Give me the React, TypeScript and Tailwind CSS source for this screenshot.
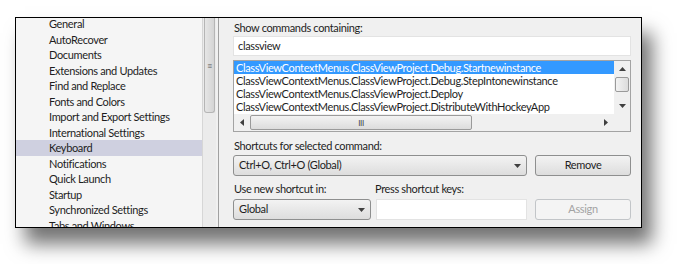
import { ReactNode } from "react";

const pages = [
  "General",
  "AutoRecover",
  "Documents",
  "Extensions and Updates",
  "Find and Replace",
  "Fonts and Colors",
  "Import and Export Settings",
  "International Settings",
  "Keyboard",
  "Notifications",
  "Quick Launch",
  "Startup",
  "Synchronized Settings",
  "Tabs and Windows",
];

const commands = [
  "ClassViewContextMenus.ClassViewProject.Debug.Startnewinstance",
  "ClassViewContextMenus.ClassViewProject.Debug.StepIntonewinstance",
  "ClassViewContextMenus.ClassViewProject.Deploy",
  "ClassViewContextMenus.ClassViewProject.DistributeWithHockeyApp",
];

function Arrow({ dir }: { dir: "up" | "down" | "left" | "right" }) {
  const pts = {
    up: "0,4 3.5,0 7,4",
    down: "0,0 7,0 3.5,4",
    left: "4,0 4,7 0,3.5",
    right: "0,0 0,7 4,3.5",
  }[dir];
  const vertical = dir === "up" || dir === "down";
  return (
    <svg width={vertical ? 7 : 4} height={vertical ? 4 : 7} className="block">
      <polygon points={pts} fill="#404040" />
    </svg>
  );
}

function Combo({ children, className }: { children: ReactNode; className: string }) {
  return (
    <div
      className={`flex h-[21px] items-center justify-between rounded-[3px] border border-[#8e8f8f] bg-gradient-to-b from-[#f3f3f3] to-[#dddddd] pl-[5px] pr-[5px] ${className}`}
    >
      <span>{children}</span>
      <Arrow dir="down" />
    </div>
  );
}

export default function App() {
  return (
    <div
      className="h-[264px] w-[677px] bg-white pl-[15px] pt-[17px] text-[11px] tracking-[-0.35px] text-[#1e1e1e]"
      style={{ fontFamily: 'Lato, "Noto Sans", sans-serif' }}
    >
      <div className="flex h-[211px] w-[627px] overflow-hidden border border-black bg-[#f0f0f0] shadow-[10px_16px_18px_rgba(0,0,0,0.55)]">
        {/* left page list */}
        <div className="w-[186px] shrink-0 overflow-hidden bg-[#f5f5f5]">
          <div className="-mt-[2px]">
            {pages.map((p) => (
              <div
                key={p}
                className={`h-[15.5px] whitespace-nowrap pl-[33px] leading-[15.5px] ${p === "Keyboard" ? "bg-[#cfd0e0]" : ""}`}
              >
                {p}
              </div>
            ))}
          </div>
        </div>
        <div className="w-[14px] shrink-0 border-l border-[#d6d6d6] bg-[#ebebeb]">
          <div className="mx-[1px] flex h-[95px] items-center justify-center rounded-b-[3px] border border-t-0 border-[#b5b5b5] bg-gradient-to-r from-[#e6e6e6] to-[#d4d4d4] text-[9px] leading-none text-[#555]">
            ≡
          </div>
        </div>
        <div className="w-[3px] shrink-0 border-r border-[#a0a0a0] bg-[#f0f0f0]" />

        {/* right keyboard settings */}
        <div className="min-w-0 flex-1 pl-[14px] pr-[10px] pt-[2px]">
          <div className="h-[16px] pl-[1px] leading-[16px]">Show commands containing:</div>
          <div className="h-[20px] border border-[#e3e3e3] bg-white pl-[4px] leading-[18px]">classview</div>
          <div className="mt-[4px] flex h-[72px] flex-col border border-[#a3a3a3] bg-white">
            <div className="flex min-h-0 flex-1">
              <div className="min-w-0 flex-1 overflow-hidden">
                {commands.map((c, i) => (
                  <div
                    key={c}
                    className={`h-[13px] whitespace-nowrap pl-[2px] leading-[13px] ${i === 0 ? "bg-[#3399ff] text-white" : ""}`}
                  >
                    {c}
                  </div>
                ))}
              </div>
              <div className="flex w-[16px] shrink-0 flex-col items-center bg-[#f0f0f0]">
                <div className="flex h-[16px] items-center justify-center">
                  <Arrow dir="up" />
                </div>
                <div className="h-[15px] w-[14px] rounded-[2px] border border-[#9a9a9a] bg-gradient-to-r from-[#f3f3f3] to-[#dcdcdc]" />
                <div className="flex flex-1 items-end justify-center pb-[6px]">
                  <Arrow dir="down" />
                </div>
              </div>
            </div>
            <div className="flex h-[17px] shrink-0 items-center bg-[#f0f0f0]">
              <div className="flex w-[16px] justify-center">
                <Arrow dir="left" />
              </div>
              <div className="flex h-[15px] w-[222px] items-center justify-center rounded-[2px] border border-[#9a9a9a] bg-gradient-to-b from-[#f3f3f3] to-[#dcdcdc] text-[8px] leading-none text-[#444]">
                III
              </div>
              <div className="flex-1" />
              <div className="flex w-[16px] justify-center">
                <Arrow dir="right" />
              </div>
              <div className="w-[16px]" />
            </div>
          </div>

          <div className="mt-[7px] h-[14px] pl-[1px] leading-[14px]">Shortcuts for selected command:</div>
          <div className="mt-[2px] flex gap-[8px]">
            <Combo className="w-[294px]">Ctrl+O, Ctrl+O (Global)</Combo>
            <div className="flex h-[21px] flex-1 items-center justify-center rounded-[3px] border border-[#8e8f8f] bg-gradient-to-b from-[#f3f3f3] to-[#dddddd]">
              Remove
            </div>
          </div>

          <div className="mt-[6px] flex h-[14px] leading-[14px]">
            <div className="w-[142px] pl-[1px]">Use new shortcut in:</div>
            <div>Press shortcut keys:</div>
          </div>
          <div className="mt-[3px] flex">
            <Combo className="w-[138px]">Global</Combo>
            <div className="ml-[5px] h-[21px] w-[151px] border border-[#e3e3e3] bg-white" />
            <div className="ml-[8px] flex h-[21px] flex-1 items-center justify-center rounded-[3px] border border-[#c2c5c8] bg-[#f4f4f4] text-[#a3a3a3]">
              Assign
            </div>
          </div>
        </div>
      </div>
    </div>
  );
}
